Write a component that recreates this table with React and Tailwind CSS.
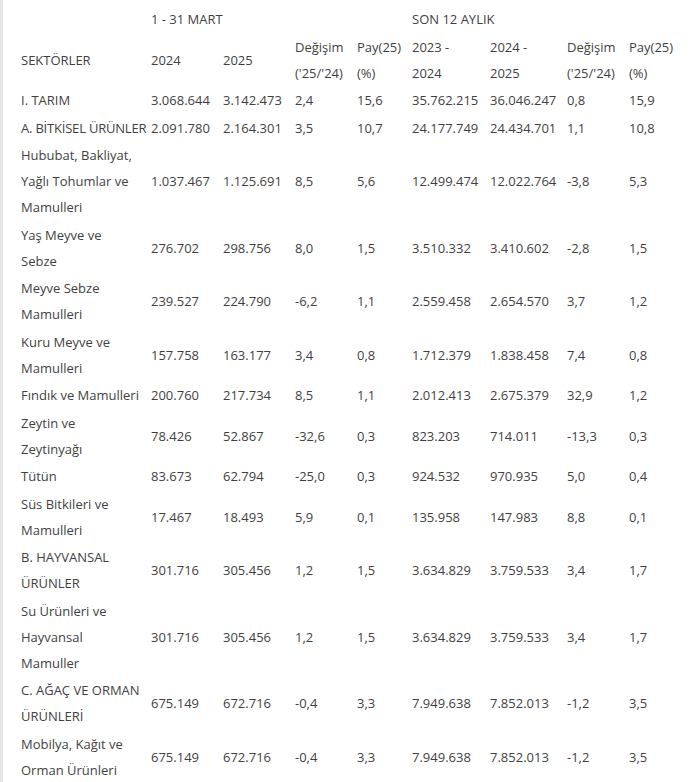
import React from 'react';

const rows = [
    { name: ['I. TARIM'], v: ['3.068.644', '3.142.473', '2,4', '15,6', '35.762.215', '36.046.247', '0,8', '15,9'] },
    { name: ['A. BİTKİSEL ÜRÜNLER'], v: ['2.091.780', '2.164.301', '3,5', '10,7', '24.177.749', '24.434.701', '1,1', '10,8'] },
    { name: ['Hububat, Bakliyat,', 'Yağlı Tohumlar ve', 'Mamulleri'], v: ['1.037.467', '1.125.691', '8,5', '5,6', '12.499.474', '12.022.764', '-3,8', '5,3'] },
    { name: ['Yaş Meyve ve', 'Sebze'], v: ['276.702', '298.756', '8,0', '1,5', '3.510.332', '3.410.602', '-2,8', '1,5'] },
    { name: ['Meyve Sebze', 'Mamulleri'], v: ['239.527', '224.790', '-6,2', '1,1', '2.559.458', '2.654.570', '3,7', '1,2'] },
    { name: ['Kuru Meyve ve', 'Mamulleri'], v: ['157.758', '163.177', '3,4', '0,8', '1.712.379', '1.838.458', '7,4', '0,8'] },
    { name: ['Fındık ve Mamulleri'], v: ['200.760', '217.734', '8,5', '1,1', '2.012.413', '2.675.379', '32,9', '1,2'] },
    { name: ['Zeytin ve', 'Zeytinyağı'], v: ['78.426', '52.867', '-32,6', '0,3', '823.203', '714.011', '-13,3', '0,3'] },
    { name: ['Tütün'], v: ['83.673', '62.794', '-25,0', '0,3', '924.532', '970.935', '5,0', '0,4'] },
    { name: ['Süs Bitkileri ve', 'Mamulleri'], v: ['17.467', '18.493', '5,9', '0,1', '135.958', '147.983', '8,8', '0,1'] },
    { name: ['B. HAYVANSAL', 'ÜRÜNLER'], v: ['301.716', '305.456', '1,2', '1,5', '3.634.829', '3.759.533', '3,4', '1,7'] },
    { name: ['Su Ürünleri ve', 'Hayvansal', 'Mamuller'], v: ['301.716', '305.456', '1,2', '1,5', '3.634.829', '3.759.533', '3,4', '1,7'] },
    { name: ['C. AĞAÇ VE ORMAN', 'ÜRÜNLERİ'], v: ['675.149', '672.716', '-0,4', '3,3', '7.949.638', '7.852.013', '-1,2', '3,5'] },
    { name: ['Mobilya, Kağıt ve', 'Orman Ürünleri'], v: ['675.149', '672.716', '-0,4', '3,3', '7.949.638', '7.852.013', '-1,2', '3,5'] },
];

const widths = [130, 72, 72, 62, 55, 78, 77, 62, 60];

const Lines = ({ lines }) => lines.map((l, i) => (
    <React.Fragment key={i}>{i > 0 && <br />}{l}</React.Fragment>
));

const cell = 'p-0 pt-[1px] pb-[0.5px] align-middle text-left font-normal whitespace-nowrap';

export default function App() {
    return (
        <div className="bg-white w-[700px] h-[782px] overflow-hidden">
            <div className="border-l-[3px] border-[#e6e6e6] pl-[18px] pt-[5px] h-full text-[#3f3f3f] text-[13px] leading-[26px]" style={{ fontFamily: '"Open Sans", "DejaVu Sans", sans-serif' }}>
                <table className="table-fixed border-collapse">
                    <colgroup>
                        {widths.map((w, i) => <col key={i} style={{ width: w }} />)}
                    </colgroup>
                    <thead>
                        <tr>
                            <th className={cell}></th>
                            <th className={cell} colSpan={4}>1 - 31 MART</th>
                            <th className={cell} colSpan={4}>SON 12 AYLIK</th>
                        </tr>
                        <tr>
                            <th className={cell}>SEKTÖRLER</th>
                            <th className={cell}>2024</th>
                            <th className={cell}>2025</th>
                            <th className={cell}>Değişim<br />('25/'24)</th>
                            <th className={cell}>Pay(25)<br />(%)</th>
                            <th className={cell}>2023 -<br />2024</th>
                            <th className={cell}>2024 -<br />2025</th>
                            <th className={cell}>Değişim<br />('25/'24)</th>
                            <th className={cell}>Pay(25)<br />(%)</th>
                        </tr>
                    </thead>
                    <tbody>
                        {rows.map((r, i) => (
                            <tr key={i}>
                                <td className={`${cell} ${i === 1 ? 'tracking-[-0.2px]' : ''}`}><Lines lines={r.name} /></td>
                                {r.v.map((v, j) => (
                                    <td key={j} className={cell}>{v}</td>
                                ))}
                            </tr>
                        ))}
                    </tbody>
                </table>
            </div>
        </div>
    );
}
